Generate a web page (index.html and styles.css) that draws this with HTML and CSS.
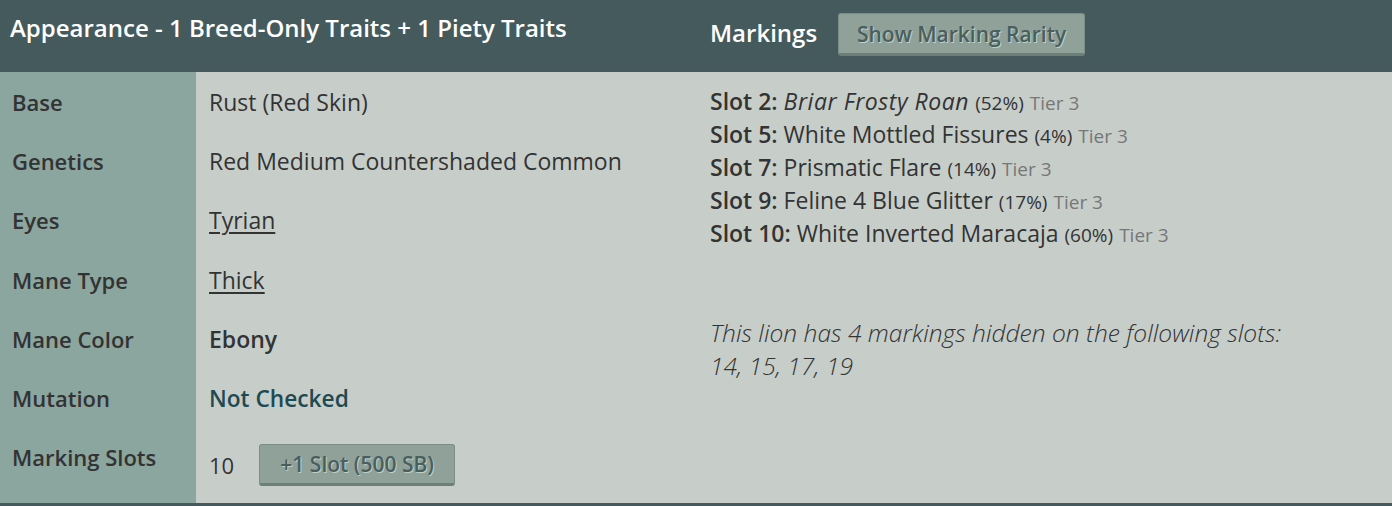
FILE: index.html
```html
<!DOCTYPE html>
<html>
<head>
<meta charset="utf-8">
<link rel="stylesheet" href="styles.css">
</head>
<body>
<div class="panel">
  <section class="appearance">
    <header class="head head-left">
      <h2 class="title">Appearance - 1 Breed-Only Traits + 1 Piety Traits</h2>
    </header>
    <div class="traits">
      <div class="row"><div class="label">Base</div><div class="value">Rust (Red Skin)</div></div>
      <div class="row"><div class="label">Genetics</div><div class="value">Red Medium Countershaded Common</div></div>
      <div class="row"><div class="label">Eyes</div><div class="value"><a class="link">Tyrian</a></div></div>
      <div class="row"><div class="label">Mane Type</div><div class="value"><a class="link">Thick</a></div></div>
      <div class="row"><div class="label">Mane Color</div><div class="value strong">Ebony</div></div>
      <div class="row"><div class="label">Mutation</div><div class="value strong teal">Not Checked</div></div>
      <div class="row last"><div class="label">Marking Slots</div><div class="value value-slots"><span class="count">10</span><button class="btn btn-slot">+1 Slot (500 SB)</button></div></div>
    </div>
  </section>
  <section class="markings">
    <header class="head head-right">
      <h2 class="title title-mark">Markings</h2>
      <button class="btn btn-rarity">Show Marking Rarity</button>
    </header>
    <div class="mark-body">
      <ul class="slots">
        <li><b>Slot 2:</b> <i class="mark-name">Briar Frosty Roan</i> <span class="pct">(52%)</span> <span class="tier">Tier 3</span></li>
        <li><b>Slot 5:</b> White Mottled Fissures <span class="pct">(4%)</span> <span class="tier">Tier 3</span></li>
        <li><b>Slot 7:</b> Prismatic Flare <span class="pct">(14%)</span> <span class="tier">Tier 3</span></li>
        <li><b>Slot 9:</b> Feline 4 Blue Glitter <span class="pct">(17%)</span> <span class="tier">Tier 3</span></li>
        <li><b>Slot 10:</b> White Inverted Maracaja <span class="pct">(60%)</span> <span class="tier">Tier 3</span></li>
      </ul>
      <p class="hidden-note">This lion has 4 markings hidden on the following slots:<br>14, 15, 17, 19</p>
    </div>
  </section>
</div>
</body>
</html>
```
FILE: styles.css
```css
* { box-sizing: border-box; }
html, body { margin: 0; padding: 0; }
body {
  font-family: "Open Sans", "Noto Sans", sans-serif;
  color: #333;
  background: #c7ceca;
  width: 1392px;
  height: 506px;
  overflow: hidden;
}
.panel {
  display: grid;
  grid-template-columns: 700px 1fr;
  height: 506px;
  border-bottom: 3px solid #455a5c;
  background: #c7ceca;
}
.appearance, .markings { display: flex; flex-direction: column; }
.head {
  background: #455a5c;
  height: 72px;
  flex: none;
  display: flex;
  align-items: flex-start;
}
.head-left { padding: 11px 10px 0; }
.head-right { padding: 13px 0 0 10px; gap: 21px; }
.title {
  margin: 0;
  color: #fff;
  font-weight: 600;
  font-size: 24px;
  line-height: 34px;
}
.title-mark { margin-top: 3px; }
.traits { flex: 1; display: flex; flex-direction: column; background: linear-gradient(to right, #8ba59f 196px, #c7ceca 196px); }
.row {
  display: grid;
  grid-template-columns: 196px 1fr;
  height: 59.3px;
  align-items: center;
}
.label {
  padding-left: 12px;
  font-size: 22px;
  font-weight: 600;
  color: #333;
}
.value {
  padding-left: 13px;
  font-size: 23px;
  display: flex;
  align-items: center;
}
.value-slots { padding-top: 16px; font-size: 22px; }
.strong { font-weight: 600; }
.teal { color: #1f4a52; font-size: 22.7px; }
.link { color: #333; text-decoration: underline; text-underline-offset: 3px; }
.count { margin-right: 25px; }
.btn {
  font-family: "Open Sans", "Noto Sans", sans-serif;
  font-weight: 600;
  background: #90a199;
  color: #4a5e5e;
  border: 1px solid #7b8d86;
  border-bottom: 3px solid #6e7f79;
  border-radius: 3px;
  text-shadow: 1px 1px 0 #bcd0c7;
  padding: 0;
  cursor: pointer;
}
.btn-slot { width: 196px; height: 42px; font-size: 21px; }
.btn-rarity { width: 247px; height: 43px; font-size: 21px; }
.mark-body { padding: 13px 0 0 10px; }
.slots { list-style: none; margin: 0; padding: 0; }
.slots li { font-size: 23px; line-height: 33px; }
.slots b { font-weight: 600; }
.mark-name { letter-spacing: 0.55px; }
.pct, .tier { font-size: 19px; line-height: 1; }
.tier { color: #777; }
.hidden-note {
  margin: 66px 0 0;
  font-style: italic;
  font-weight: 300;
  font-size: 24.6px;
  line-height: 33px;
}
```
